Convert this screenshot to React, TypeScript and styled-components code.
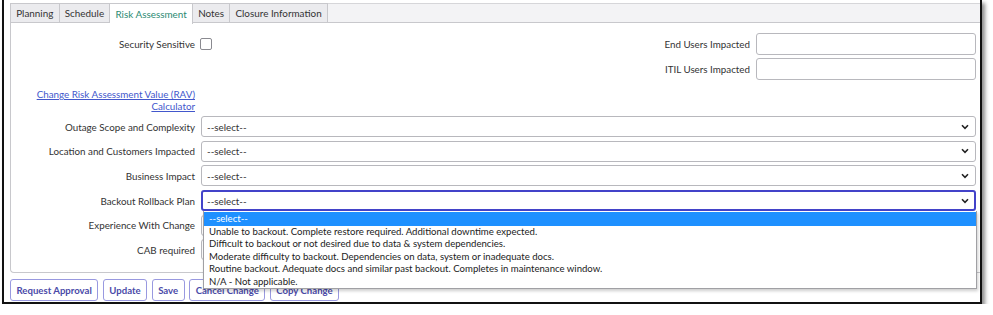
import React from "react";
import styled, { createGlobalStyle } from "styled-components";

const GlobalStyle = createGlobalStyle`
  html, body { margin: 0; padding: 0; background: #ffffff; }
  body { font-family: Lato, "Noto Sans", "Liberation Sans", sans-serif; font-size: 9.8px; color: #333; }
  * { box-sizing: border-box; }
`;

const Frame = styled.div`
  margin-left: 2px;
  width: 980px;
  height: 304px;
  border-left: 2px solid #111;
  border-right: 2px solid #111;
  border-bottom: 2px solid #111;
  box-shadow: 3px 3px 4px rgba(0, 0, 0, 0.45);
  padding: 3px 0 0 6px;
  background: #fff;
  position: relative;
`;

const TabBar = styled.div`
  display: flex;
  height: 20px;
  background: #f3f3f5;
  border-top: 1px solid #d6d6d9;
`;

const Tab = styled.div<{ $active?: boolean; $first?: boolean }>`
  display: flex;
  align-items: center;
  padding: 0 5.2px;
  height: ${(p) => (p.$active ? "21px" : "20px")};
  margin-top: -1px;
  border: 1px solid #c8c8cc;
  border-left: ${(p) => (p.$first ? "1px solid #c8c8cc" : "none")};
  border-bottom: ${(p) => (p.$active ? "none" : "1px solid #c8c8cc")};
  background: ${(p) => (p.$active ? "#ffffff" : "#ebebee")};
  color: ${(p) => (p.$active ? "#2b8a72" : "#333")};
  font-size: 9.9px;
  position: relative;
  z-index: 1;
`;

const Panel = styled.div`
  margin-top: -1px;
  height: 251px;
  border: 1px solid #c8c8cc;
  border-right: none;
  border-radius: 0 0 0 4px;
  padding-top: 10px;
  background: #fff;
`;

const TopSection = styled.div`
  display: flex;
  justify-content: space-between;
  padding-right: 4px;
`;

const LeftCol = styled.div`
  display: flex;
  flex-direction: column;
`;

const RightCol = styled.div`
  display: flex;
  flex-direction: column;
  gap: 4px;
`;

const Row = styled.div`
  display: flex;
  align-items: center;
  height: 21px;
`;

const FieldRow = styled.div`
  display: grid;
  grid-template-columns: 184px 1fr;
  column-gap: 6px;
  align-items: center;
  height: 21px;
  margin-bottom: 3.7px;
  padding-right: 4px;
`;

const Label = styled.div<{ $width?: number }>`
  text-align: right;
  color: #333;
  font-size: 9.8px;
  white-space: nowrap;
  ${(p) => (p.$width ? `width: ${p.$width}px;` : "")}
`;

const RightLabel = styled(Label)`
  width: 160px;
  margin-right: 6px;
`;

const CheckBox = styled.div`
  width: 12px;
  height: 12px;
  border: 1px solid #8a8a90;
  border-radius: 2px;
  background: #fff;
  margin-left: 5px;
`;

const TextInput = styled.div`
  width: 220px;
  height: 22px;
  border: 1px solid #b8b8bd;
  border-radius: 3px;
  background: #fff;
`;

const LinkBlock = styled.div`
  width: 184px;
  text-align: right;
  margin-top: 10px;
  margin-bottom: 4px;
  line-height: 11.5px;
`;

const Link = styled.a`
  color: #4257cc;
  text-decoration: underline;
  font-size: 9.8px;
`;

const SelectBox = styled.div<{ $focused?: boolean }>`
  display: flex;
  align-items: center;
  justify-content: space-between;
  height: 21px;
  border: ${(p) => (p.$focused ? "2px solid #4343c9" : "1px solid #b8b8bd")};
  border-radius: 3px;
  padding: ${(p) => (p.$focused ? "0 5px 0 4px" : "0 6px 0 5px")};
  background: #fff;
  color: #333;
  font-size: 9.8px;
`;

const Chevron = () => (
  <svg width="8" height="6" viewBox="0 0 8 6">
    <path d="M1 1.3 L4 4.3 L7 1.3" fill="none" stroke="#222" strokeWidth="1.6" />
  </svg>
);

const Dropdown = styled.div`
  position: absolute;
  left: 199px;
  top: 211px;
  width: 774px;
  height: 78px;
  border: 1px solid #a0a0a4;
  border-top: none;
  background: #fff;
  box-shadow: 1px 2px 3px rgba(0, 0, 0, 0.2);
  z-index: 5;
  padding-top: 1px;
`;

const Option = styled.div<{ $selected?: boolean }>`
  height: ${(p) => (p.$selected ? "13.5px" : "12.6px")};
  line-height: ${(p) => (p.$selected ? "13.5px" : "12.6px")};
  padding-left: 5px;
  font-size: 9.6px;
  white-space: nowrap;
  background: ${(p) => (p.$selected ? "#1e90ff" : "transparent")};
  color: ${(p) => (p.$selected ? "#ffffff" : "#222")};
`;

const ButtonBar = styled.div`
  display: flex;
  gap: 4.5px;
  margin-top: 6px;
`;

const Button = styled.div`
  height: 22px;
  display: flex;
  align-items: center;
  padding: 0 5.5px;
  border: 1px solid #9999e0;
  border-radius: 3px;
  background: #fff;
  color: #4a4aa8;
  font-weight: 700;
  font-size: 9.6px;
`;

const tabs = ["Planning", "Schedule", "Risk Assessment", "Notes", "Closure Information"];

const selects = [
  { label: "Outage Scope and Complexity" },
  { label: "Location and Customers Impacted" },
  { label: "Business Impact" },
  { label: "Backout Rollback Plan", focused: true },
  { label: "Experience With Change", covered: true },
  { label: "CAB required", covered: true },
];

const options = [
  "--select--",
  "Unable to backout. Complete restore required. Additional downtime expected.",
  "Difficult to backout or not desired due to data & system dependencies.",
  "Moderate difficulty to backout. Dependencies on data, system or inadequate docs.",
  "Routine backout. Adequate docs and similar past backout. Completes in maintenance window.",
  "N/A - Not applicable.",
];

const buttons = ["Request Approval", "Update", "Save", "Cancel Change", "Copy Change"];

export default function App() {
  return (
    <>
      <GlobalStyle />
      <Frame>
        <TabBar>
          {tabs.map((t, i) => (
            <Tab key={t} $active={t === "Risk Assessment"} $first={i === 0}>
              {t}
            </Tab>
          ))}
        </TabBar>
        <Panel>
          <TopSection>
            <LeftCol>
              <Row>
                <Label $width={184}>Security Sensitive</Label>
                <CheckBox />
              </Row>
            </LeftCol>
            <RightCol>
              <Row>
                <RightLabel>End Users Impacted</RightLabel>
                <TextInput />
              </Row>
              <Row>
                <RightLabel>ITIL Users Impacted</RightLabel>
                <TextInput />
              </Row>
            </RightCol>
          </TopSection>
          <LinkBlock>
            <Link href="#">Change Risk Assessment Value (RAV) Calculator</Link>
          </LinkBlock>
          {selects.map((s) => (
            <FieldRow key={s.label}>
              <Label>{s.label}</Label>
              <SelectBox $focused={s.focused}>
                <span>{s.covered ? "" : "--select--"}</span>
                <Chevron />
              </SelectBox>
            </FieldRow>
          ))}
        </Panel>
        <ButtonBar>
          {buttons.map((b) => (
            <Button key={b}>{b}</Button>
          ))}
        </ButtonBar>
        <Dropdown>
          {options.map((o, i) => (
            <Option key={o} $selected={i === 0}>
              {o}
            </Option>
          ))}
        </Dropdown>
      </Frame>
    </>
  );
}
